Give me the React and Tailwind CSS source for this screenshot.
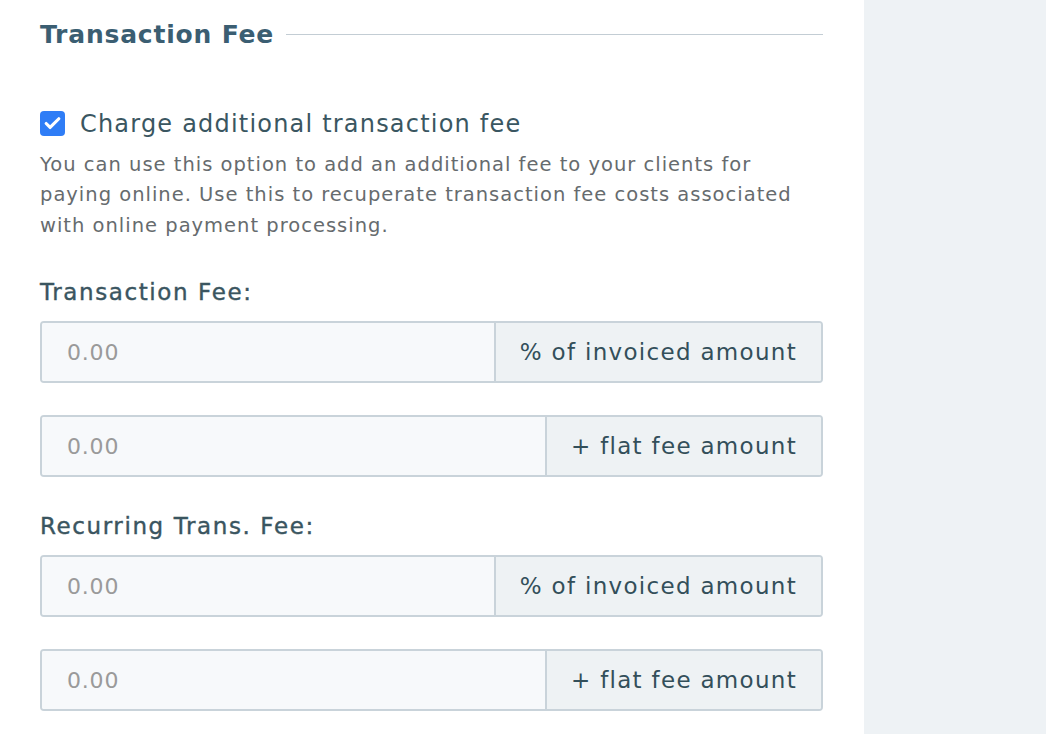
import { Check } from 'lucide-react';

function FeeGroup({ addon }) {
  return (
    <div className="flex h-[62px] w-full rounded-[4px] border-2 border-[#c9d3da] overflow-hidden">
      <input
        type="text"
        placeholder="0.00"
        className="min-w-0 flex-1 bg-[#f7f9fb] px-[25px] text-[22px] tracking-[0.8px] text-[#3b5560] placeholder:text-[#9a9a9a] outline-none"
      />
      <div className="flex items-center border-l-2 border-[#c9d3da] bg-[#eef2f4] px-[24px] text-[23px] tracking-[1.3px] text-[#334f5a]">
        {addon}
      </div>
    </div>
  );
}

function FieldLabel({ children, className = '' }) {
  return (
    <div className={`text-[23px] leading-[30px] tracking-[1.6px] text-[#3a5560] [-webkit-text-stroke:0.4px_#3a5560] ${className}`}>
      {children}
    </div>
  );
}

export default function App() {
  return (
    <div className="flex min-h-[734px] w-full font-['DejaVu_Sans',sans-serif]">
      <div className="w-[864px] bg-white pl-[40px] pr-[41px] pt-[16px]">
        <div className="flex items-center gap-[12px]">
          <h2 className="text-[25px] font-bold tracking-[0.8px] text-[#3b5e72]">Transaction Fee</h2>
          <div className="h-px flex-1 bg-[#c3cdd4]" />
        </div>

        <label className="mt-[52px] flex items-center gap-[15px]">
          <span className="flex h-[25px] w-[25px] items-center justify-center rounded-[4px] bg-[#2f7df6]">
            <Check size={19} strokeWidth={4} className="text-white" />
          </span>
          <span className="text-[24px] tracking-[1.2px] text-[#3a5661]">Charge additional transaction fee</span>
        </label>

        <p className="mt-[8px] text-[19.5px] leading-[30.5px] tracking-[1px] text-[#666b6e]">
          You can use this option to add an additional fee to your clients for paying online. Use this to recuperate transaction fee costs associated with online payment processing.
        </p>

        <FieldLabel className="mt-[36px]">Transaction Fee:</FieldLabel>
        <div className="mt-[14px] flex flex-col gap-[32px]">
          <FeeGroup addon="% of invoiced amount" />
          <FeeGroup addon="+ flat fee amount" />
        </div>

        <FieldLabel className="mt-[34px]">Recurring Trans. Fee:</FieldLabel>
        <div className="mt-[14px] flex flex-col gap-[32px]">
          <FeeGroup addon="% of invoiced amount" />
          <FeeGroup addon="+ flat fee amount" />
        </div>
      </div>
      <div className="flex-1 bg-[#eef2f5]" />
    </div>
  );
}
